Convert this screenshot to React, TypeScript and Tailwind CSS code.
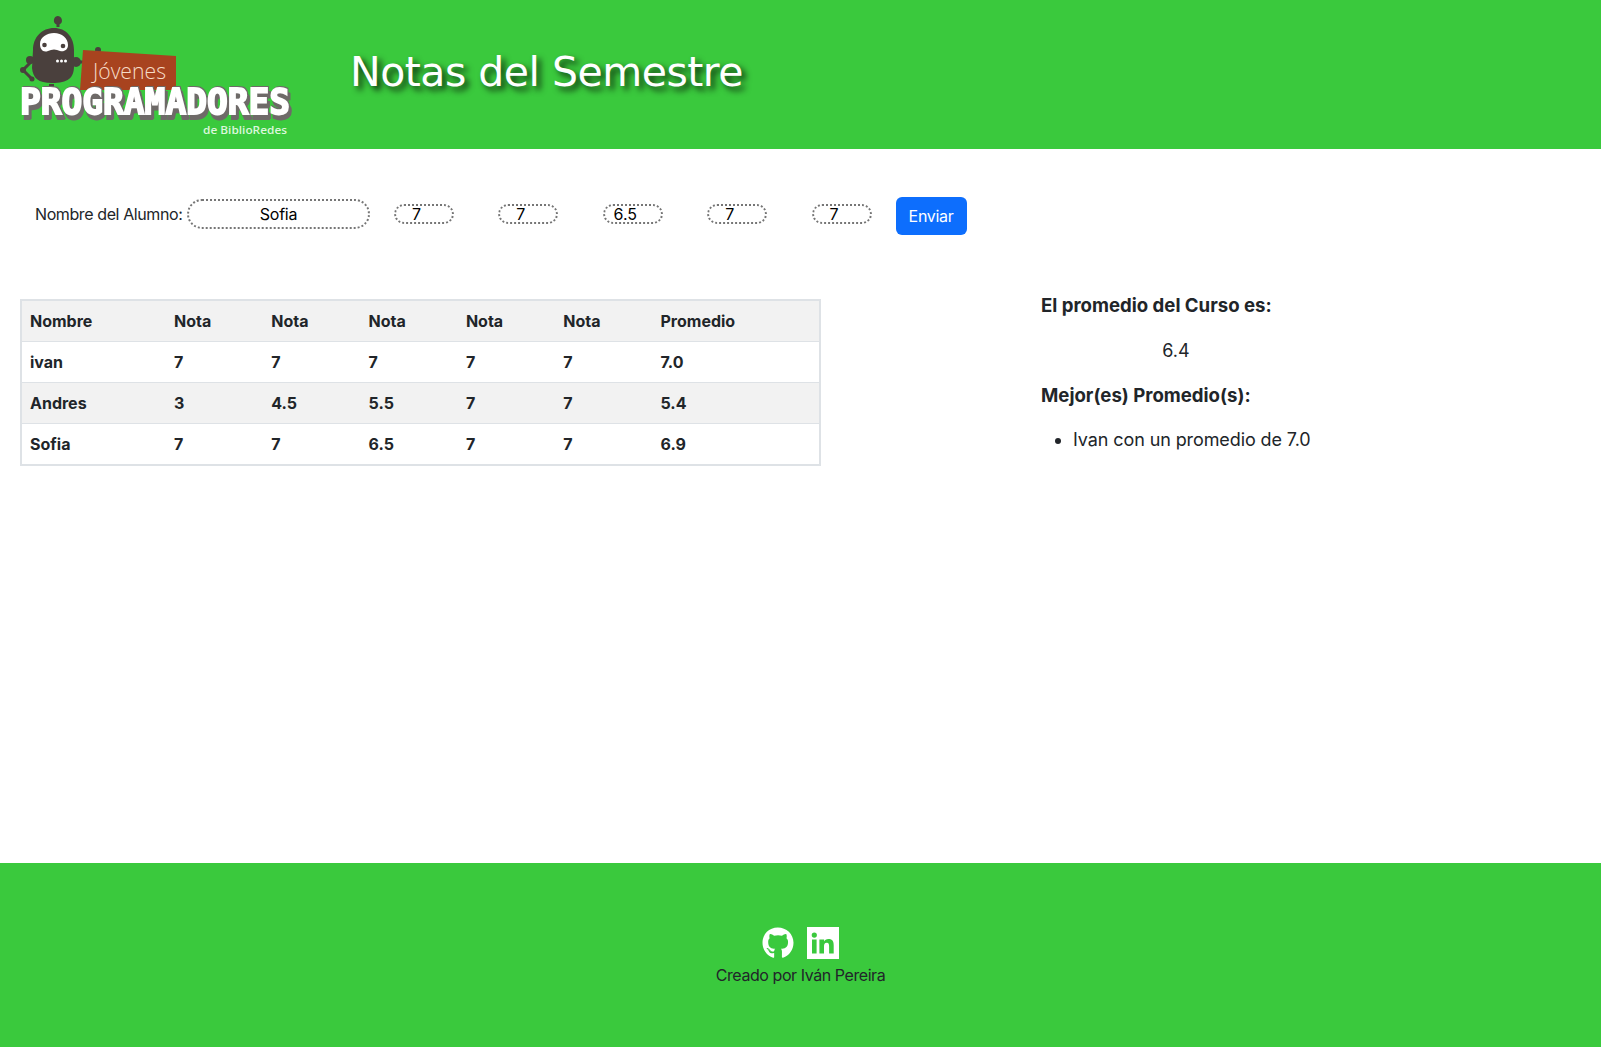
import React from "react";
import { FaGithub } from "react-icons/fa";

function Logo() {
  return (
    <svg width="320" height="149" viewBox="0 0 320 149" className="block shrink-0">
      <path fillRule="evenodd" d="M57.500 16a4.500 4.500 0 0 1 2 8.500V27h-3v-2.500a4.500 4.500 0 0 1 1-8.500z" fill="#4a403d" />
      <path d="M33 60 L23 70 L32 79 M72 62 L86 62" stroke="#4a403d" strokeWidth="3" fill="none" />
      <circle cx="23" cy="70" r="3" fill="#4a403d" />
      <circle cx="32" cy="79" r="2.500" fill="#4a403d" />
      <circle cx="30" cy="60" r="4" fill="#4a403d" />
      <circle cx="76" cy="62" r="5" fill="#4a403d" />
      <circle cx="98" cy="50" r="3" fill="#4a403d" />
      <path d="M54 28C66 28 74 37 74 50V66C74 78 68 83 52 83C38 83 33 78 32 68L33 50C33 37 42 28 54 28Z" fill="#4a403d" />
      <path d="M49 84h5v3h-5z" fill="#4a403d" />
      <path d="M40 44C40 37 47 33 54 33C62 33 68 38 68 45C68 50 64 52 60 51C56 49 52 49 48 51C43 53 40 49 40 44Z" fill="#ffffff" />
      <circle cx="44.500" cy="45" r="2.300" fill="#4a403d" />
      <circle cx="63" cy="46" r="2.300" fill="#4a403d" />
      <circle cx="57.500" cy="61" r="1.500" fill="#ffffff" />
      <circle cx="61.500" cy="61" r="1.500" fill="#ffffff" />
      <circle cx="65.500" cy="61" r="1.500" fill="#ffffff" />
      <path d="M83 50 L176 56 L176 90 L80 90 Z" fill="#a8431f" />
      <text x="93" y="79" fontSize="22" fontWeight="300" textLength="73" lengthAdjust="spacingAndGlyphs" fill="#f6dcc8" fontFamily="'Open Sans', sans-serif">Jóvenes</text>
      <g className="[filter:drop-shadow(2px_5px_0_#6e6a68)_drop-shadow(1px_-1px_0_#6e6a68)]">
        <text x="20" y="113.500" fontSize="35" fontWeight="700" textLength="270" lengthAdjust="spacingAndGlyphs" fill="#ffffff" stroke="#ffffff" strokeWidth="1.800" fontFamily="'DejaVu Sans Mono', monospace">PROGRAMADORES</text>
      </g>
      <text x="203" y="134" fontSize="11.500" fontWeight="600" textLength="84" lengthAdjust="spacingAndGlyphs" fill="#dcf7dc" fontFamily="'Open Sans', sans-serif">de BiblioRedes</text>
    </svg>
  );
}

function LinkedIn() {
  return (
    <svg width="32" height="32" viewBox="0 0 32 32" className="block">
      <path
        fillRule="evenodd"
        fill="#ffffff"
        d="M0 0h32v32H0z M5 12.500v14h4.600v-14z M7.300 5.500a2.600 2.600 0 1 0 0 5.200 2.600 2.600 0 0 0 0-5.200z M12.400 12.500v14H17v-7.200c0-2 .5-3.600 2.800-3.600 2.200 0 2.300 1.900 2.300 3.800v7h4.600v-7.900c0-3.900-1-6.500-5.300-6.500-2.200 0-3.600 1.100-4.300 2.300v-1.900z"
      />
    </svg>
  );
}

const rows = [
  ["ivan", "7", "7", "7", "7", "7", "7.0"],
  ["Andres", "3", "4.5", "5.5", "7", "7", "5.4"],
  ["Sofia", "7", "7", "6.5", "7", "7", "6.9"],
];
const notes = ["7", "7", "6.5", "7", "7"];

export default function App() {
  return (
    <div className="min-h-[1047px] flex flex-col bg-white text-[#212529] font-['Inter',sans-serif] text-base">
      <header className="h-[149px] bg-[#3ac93d] flex items-start">
        <Logo />
        <h1 className="ml-[30px] mt-[45px] text-[41px] leading-[54px] tracking-[-0.5px] font-normal text-white font-['DejaVu_Sans',sans-serif] [text-shadow:4px_4px_6px_rgba(0,0,0,0.8)]">
          Notas del Semestre
        </h1>
      </header>

      <form className="flex items-start pt-[48px] pl-[35px]">
        <label className="mt-[5px] mr-[4px] w-[148px] whitespace-nowrap leading-6 tracking-[-0.4px]">Nombre del Alumno:</label>
        <input
          readOnly
          value="Sofia"
          className="w-[183px] h-[30px] mt-[2px] rounded-[15px] border-2 border-dotted border-[#767676] text-center text-black tracking-[-0.2px] outline-none"
        />
        <div className="flex ml-[24px] gap-[44.400px]">
          {notes.map((n, i) => (
            <input
              key={i}
              readOnly
              value={n}
              className="w-[60px] h-[20px] mt-[7px] rounded-[10px] border-2 border-dotted border-[#767676] pr-[15px] text-center leading-4 text-black outline-none"
            />
          ))}
        </div>
        <button type="button" className="ml-[24px] w-[71px] h-[38px] rounded-[6px] bg-[#0d6efd] text-white tracking-[-0.3px]">
          Enviar
        </button>
      </form>

      <main className="flex items-start pt-[64px] pl-[20px]">
        <table className="w-[801px] table-fixed border-collapse border-2 border-[#dee2e6] font-bold">
          <thead>
            <tr className="h-[41px] bg-[#f2f2f2] border-b border-[#dee2e6] text-left">
              <th className="w-[145px] px-2 font-bold">Nombre</th>
              <th className="w-[97.300px] px-2 font-bold">Nota</th>
              <th className="w-[97.300px] px-2 font-bold">Nota</th>
              <th className="w-[97.300px] px-2 font-bold">Nota</th>
              <th className="w-[97.300px] px-2 font-bold">Nota</th>
              <th className="w-[97.300px] px-2 font-bold">Nota</th>
              <th className="px-2 font-bold">Promedio</th>
            </tr>
          </thead>
          <tbody>
            {rows.map((r, i) => (
              <tr key={i} className={`border-b border-[#dee2e6] ${i === 2 ? "h-[42px]" : "h-[41px]"} ${i === 1 ? "bg-[#f2f2f2]" : "bg-white"}`}>
                {r.map((c, j) => (
                  <td key={j} className="px-2">
                    {c}
                  </td>
                ))}
              </tr>
            ))}
          </tbody>
        </table>

        <aside className="ml-[220px] w-[320px] text-[18px] leading-[27px] -mt-[7px]">
          <p className="font-bold text-[18.600px] mb-[18px]">El promedio del Curso es:</p>
          <p className="w-[270px] text-center mb-[18px]">6.4</p>
          <p className="font-bold text-[18.600px] mb-[17px]">Mejor(es) Promedio(s):</p>
          <ul className="list-disc pl-[32px]">
            <li className="whitespace-nowrap tracking-[-0.1px]">Ivan con un promedio de 7.0</li>
          </ul>
        </aside>
      </main>

      <footer className="mt-auto h-[184px] bg-[#3ac93d] flex flex-col items-center justify-center pt-[4px]">
        <div className="flex gap-[13px] text-white">
          <FaGithub size={32} className="block" />
          <LinkedIn />
        </div>
        <p className="mt-[4px] leading-6 tracking-[-0.43px]">Creado por Iván Pereira</p>
      </footer>
    </div>
  );
}
